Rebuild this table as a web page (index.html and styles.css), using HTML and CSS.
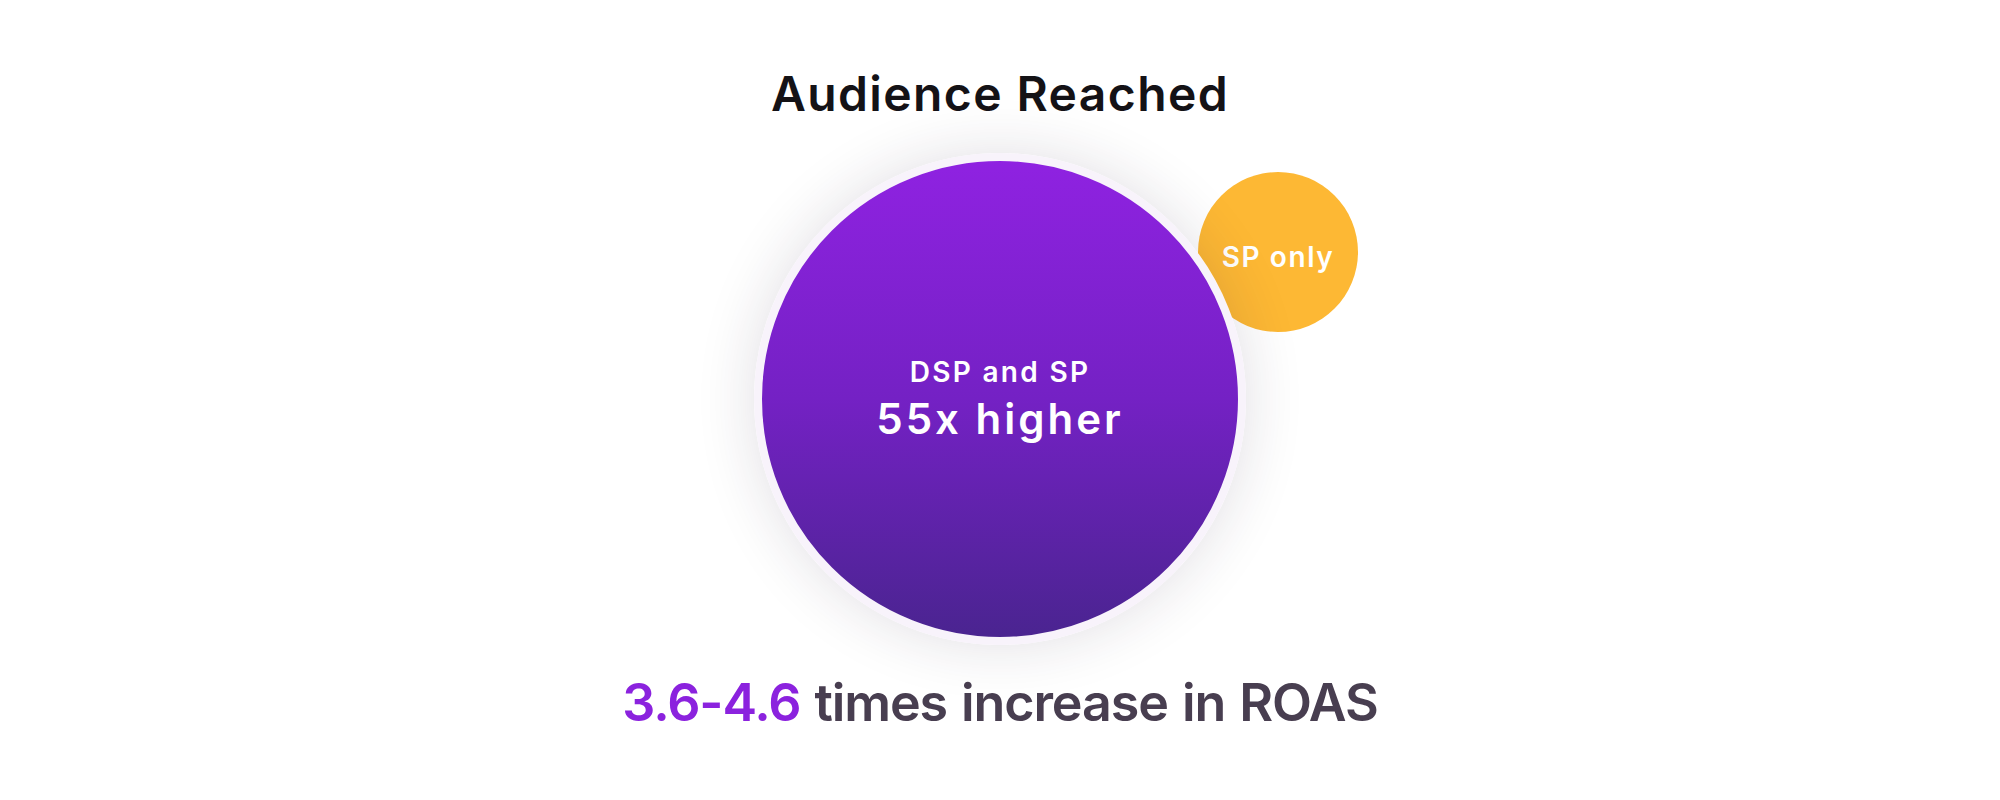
FILE: index.html
```html
<!DOCTYPE html>
<html lang="en">
<head>
<meta charset="utf-8">
<title>Audience Reached</title>
<link rel="stylesheet" href="styles.css">
</head>
<body>
<main class="page">
  <h1 class="title">Audience Reached</h1>
  <div class="venn">
    <div class="bubble-small"><span>SP only</span></div>
    <div class="bubble-main">
      <div class="label">DSP and SP</div>
      <div class="value">55x higher</div>
    </div>
  </div>
  <p class="result"><span class="accent">3.6-4.6</span> times increase in ROAS</p>
</main>
</body>
</html>
```

FILE: styles.css
```css
html, body {
  margin: 0;
  padding: 0;
  background: #ffffff;
}

body {
  font-family: "Inter", "Noto Sans", sans-serif;
  width: 2000px;
  height: 800px;
  overflow: hidden;
}

.page {
  display: flex;
  flex-direction: column;
  align-items: center;
  padding-top: 64px;
}

.title {
  margin: 0;
  font-size: 48px;
  line-height: 60px;
  font-weight: 600;
  color: #141216;
  letter-spacing: 1.4px;
}

.venn {
  position: relative;
  width: 492px;
  height: 492px;
  margin-top: 29px;
}

.bubble-main {
  position: relative;
  z-index: 2;
  box-sizing: border-box;
  width: 492px;
  height: 492px;
  border-radius: 50%;
  border: 8px solid #f8f3fb;
  background: linear-gradient(180deg, #8f22e1 0%, #7421c4 50%, #4a2490 100%);
  box-shadow: 0 0 60px rgba(40, 25, 60, 0.14);
  display: flex;
  flex-direction: column;
  align-items: center;
  justify-content: center;
  color: #ffffff;
  gap: 5px;
}

.label {
  font-size: 28px;
  line-height: 34px;
  font-weight: 600;
  letter-spacing: 2.3px;
}

.value {
  font-size: 42px;
  line-height: 50px;
  font-weight: 600;
  letter-spacing: 3px;
}

.bubble-small {
  position: absolute;
  z-index: 1;
  left: 444px;
  top: 19px;
  width: 160px;
  height: 160px;
  border-radius: 50%;
  background: #fdb834;
  display: flex;
  align-items: center;
  justify-content: center;
  color: #ffffff;
}

.bubble-small span {
  font-size: 28px;
  font-weight: 600;
  letter-spacing: 1.6px;
  padding-top: 10px;
}

.result {
  margin: 26px 0 0;
  font-size: 52px;
  line-height: 64px;
  font-weight: 600;
  color: #483e50;
  letter-spacing: -1.1px;
  word-spacing: 2px;
}

.accent {
  color: #8b22de;
}
```
